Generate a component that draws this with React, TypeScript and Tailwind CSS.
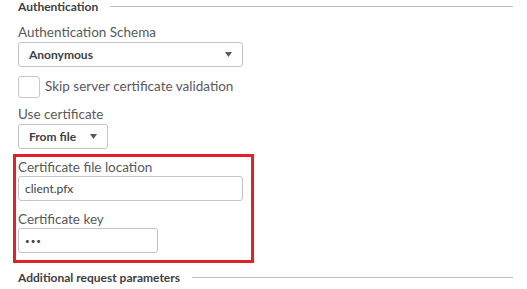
import { useState } from "react";

function Caret() {
  return (
    <svg width="7" height="5" viewBox="0 0 7 5" className="shrink-0">
      <path d="M0 0h7L3.5 5z" fill="#595959" />
    </svg>
  );
}

function Select({ value, width }: { value: string; width: string }) {
  return (
    <div
      className={`${width} h-[25px] mt-[3px] flex items-center justify-between pl-[10px] pr-[10px] border border-[#c4c4c4] rounded-[3px] bg-white`}
    >
      <span className="text-[12px] font-bold text-[#404040] leading-none">{value}</span>
      <Caret />
    </div>
  );
}

function Field({ value, width, small }: { value: string; width: string; small?: boolean }) {
  return (
    <div
      className={`${width} h-[25px] mt-[2px] flex items-center pl-[6px] border border-[#c4c4c4] rounded-[3px] bg-white`}
    >
      <span className={small ? "text-[8px] tracking-[1px] text-[#404040] leading-none" : "text-[12px] text-[#404040] leading-none"}>
        {value}
      </span>
    </div>
  );
}

function Section({ title }: { title: string }) {
  return (
    <div className="flex items-center gap-[12px] h-[13px] pr-[14px]">
      <span className="text-[12px] font-bold text-[#404040] leading-[13px] whitespace-nowrap">{title}</span>
      <div className="flex-1 h-px bg-[#bdbdbd]" />
    </div>
  );
}

export default function App() {
  const [skip, setSkip] = useState(false);
  return (
    <div className="w-[527px] h-[289px] bg-white pl-[18px] font-['Lato',sans-serif] text-[#595959] overflow-hidden">
      <Section title="Authentication" />
      <div className="mt-[12px] text-[13.5px] leading-[14px]">Authentication Schema</div>
      <Select value="Anonymous" width="w-[225px]" />

      <label className="mt-[9px] flex items-center gap-[5px] h-[22px] cursor-pointer">
        <span
          onClick={() => setSkip(!skip)}
          className="w-[22px] h-[22px] border border-[#c8c8c8] rounded-[3px] bg-white"
        />
        <span className="text-[13.5px] leading-none">Skip server certificate validation</span>
      </label>

      <div className="mt-[9px] text-[13.5px] leading-[14px]">Use certificate</div>
      <Select value="From file" width="w-[90px]" />

      <div className="mt-[5px] -ml-[5px] w-[241px] border-[3px] border-[#e5202a] pl-[2px] pt-[3px] pb-[7px]">
        <div className="text-[13.5px] leading-[14px]">Certificate file location</div>
        <Field value="client.pfx" width="w-[225px]" />
        <div className="mt-[11px] text-[13.5px] leading-[14px]">Certificate key</div>
        <Field value="•••" width="w-[140px]" small />
      </div>

      <div className="mt-[8px]">
        <Section title="Additional request parameters" />
      </div>
    </div>
  );
}
